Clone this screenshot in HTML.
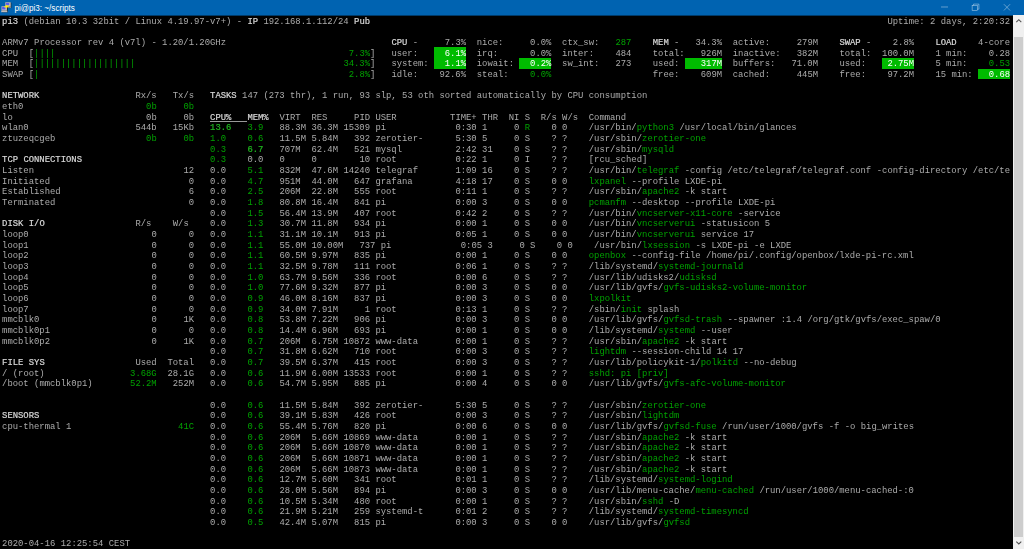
<!DOCTYPE html>
<html lang="en">
<head>
<meta charset="utf-8">
<title>pi@pi3: ~/scripts</title>
<style>
html,body{margin:0;padding:0;background:#000;overflow:hidden}
#win{position:relative;width:1024px;height:549px;background:#000;overflow:hidden}
#title{position:absolute;left:0;top:0;width:1024px;height:16px;background:linear-gradient(#0063b1 0,#0063b1 15px,#003a68 15px,#003a68 16px)}
#title .t{position:absolute;left:14.4px;top:1.1px;line-height:15.4px;font-family:"Liberation Sans",sans-serif;font-size:8.13px;color:#fff;white-space:pre}
#term{filter:blur(0.3px);position:absolute;left:0;top:0;width:1013px;height:549px;font-family:"Liberation Mono",monospace;font-size:8.8874px;line-height:10.6667px;color:#acacac}
.r{position:absolute;left:0;height:10.6667px;width:1013px;white-space:pre}
.r b{position:absolute;top:1.2px;font-weight:normal}
.r b.b{color:#d8d8d8;-webkit-text-stroke:0.2px #d8d8d8}
.r b.g{color:#00a200}
.r b.G{color:#20b820;-webkit-text-stroke:0.2px #20b820}
.r b.h{color:#fff}
i.hl{position:absolute;height:10.6667px;background:#00bb00;display:block}
i.ul{position:absolute;height:0.8px;background:#999;display:block}
#sb{position:absolute;left:1012.7px;top:15.4px;width:11.3px;height:533.6px;background:#f0f0f0}
#sb .th{position:absolute;left:0.9px;top:21.2px;width:9.2px;height:500.7px;background:#cdcdcd}
</style>
</head>
<body>
<div id="win">
<div id="term">
<div class="r" style="top:15.40px"><b class="b" style="left:2.07px">pi3</b> <b class="d" style="left:23.40px">(debian</b> <b class="d" style="left:66.07px">10.3</b> <b class="d" style="left:92.74px">32bit</b> <b class="d" style="left:124.74px">/</b> <b class="d" style="left:135.40px">Linux</b> <b class="d" style="left:167.40px">4.19.97-v7+)</b> <b class="d" style="left:236.74px">-</b> <b class="b" style="left:247.40px">IP</b> <b class="d" style="left:263.40px">192.168.1.112/24</b> <b class="b" style="left:354.07px">Pub</b> <b class="d" style="left:887.40px">Uptime:</b> <b class="d" style="left:930.07px">2</b> <b class="d" style="left:940.74px">days,</b> <b class="d" style="left:972.74px">2:20:32</b></div>
<div class="r" style="top:36.73px"><b class="d" style="left:2.07px">ARMv7</b> <b class="d" style="left:34.07px">Processor</b> <b class="d" style="left:87.40px">rev</b> <b class="d" style="left:108.74px">4</b> <b class="d" style="left:119.40px">(v7l)</b> <b class="d" style="left:151.40px">-</b> <b class="d" style="left:162.07px">1.20/1.20GHz</b> <b class="b" style="left:391.40px">CPU</b> <b class="d" style="left:412.74px">-</b> <b class="d" style="left:444.74px">7.3%</b> <b class="d" style="left:476.74px">nice:</b> <b class="d" style="left:530.07px">0.0%</b> <b class="d" style="left:562.07px">ctx_sw:</b> <b class="g" style="left:615.40px">287</b> <b class="b" style="left:652.74px">MEM</b> <b class="d" style="left:674.07px">-</b> <b class="d" style="left:695.40px">34.3%</b> <b class="d" style="left:732.74px">active:</b> <b class="d" style="left:796.74px">279M</b> <b class="b" style="left:839.40px">SWAP</b> <b class="d" style="left:866.07px">-</b> <b class="d" style="left:892.74px">2.8%</b> <b class="b" style="left:935.40px">LOAD</b> <b class="d" style="left:978.07px">4-core</b></div>
<i class="hl" style="left:434.07px;top:47.40px;width:32.00px"></i>
<div class="r" style="top:47.40px"><b class="d" style="left:2.07px">CPU</b> <b class="d" style="left:28.74px">[</b> <b class="g" style="left:34.07px">||||</b> <b class="g" style="left:348.74px">7.3%</b> <b class="d" style="left:370.07px">]</b> <b class="d" style="left:391.40px">user:</b> <b class="h" style="left:444.74px">6.1%</b> <b class="d" style="left:476.74px">irq:</b> <b class="d" style="left:530.07px">0.0%</b> <b class="d" style="left:562.07px">inter:</b> <b class="d" style="left:615.40px">484</b> <b class="d" style="left:652.74px">total:</b> <b class="d" style="left:700.74px">926M</b> <b class="d" style="left:732.74px">inactive:</b> <b class="d" style="left:796.74px">382M</b> <b class="d" style="left:839.40px">total:</b> <b class="d" style="left:882.07px">100.0M</b> <b class="d" style="left:935.40px">1</b> <b class="d" style="left:946.07px">min:</b> <b class="d" style="left:988.74px">0.28</b></div>
<i class="hl" style="left:434.07px;top:58.07px;width:32.00px"></i>
<i class="hl" style="left:519.40px;top:58.07px;width:32.00px"></i>
<i class="hl" style="left:684.74px;top:58.07px;width:37.33px"></i>
<i class="hl" style="left:882.07px;top:58.07px;width:32.00px"></i>
<div class="r" style="top:58.07px"><b class="d" style="left:2.07px">MEM</b> <b class="d" style="left:28.74px">[</b> <b class="g" style="left:34.07px">|||||||||||||||||||</b> <b class="g" style="left:343.40px">34.3%</b> <b class="d" style="left:370.07px">]</b> <b class="d" style="left:391.40px">system:</b> <b class="h" style="left:444.74px">1.1%</b> <b class="d" style="left:476.74px">iowait:</b> <b class="h" style="left:530.07px">0.2%</b> <b class="d" style="left:562.07px">sw_int:</b> <b class="d" style="left:615.40px">273</b> <b class="d" style="left:652.74px">used:</b> <b class="h" style="left:700.74px">317M</b> <b class="d" style="left:732.74px">buffers:</b> <b class="d" style="left:791.40px">71.0M</b> <b class="d" style="left:839.40px">used:</b> <b class="h" style="left:887.40px">2.75M</b> <b class="d" style="left:935.40px">5</b> <b class="d" style="left:946.07px">min:</b> <b class="g" style="left:988.74px">0.53</b></div>
<i class="hl" style="left:978.07px;top:68.73px;width:32.00px"></i>
<div class="r" style="top:68.73px"><b class="d" style="left:2.07px">SWAP</b> <b class="d" style="left:28.74px">[</b> <b class="g" style="left:34.07px">|</b> <b class="g" style="left:348.74px">2.8%</b> <b class="d" style="left:370.07px">]</b> <b class="d" style="left:391.40px">idle:</b> <b class="d" style="left:439.40px">92.6%</b> <b class="d" style="left:476.74px">steal:</b> <b class="g" style="left:530.07px">0.0%</b> <b class="d" style="left:652.74px">free:</b> <b class="d" style="left:700.74px">609M</b> <b class="d" style="left:732.74px">cached:</b> <b class="d" style="left:796.74px">445M</b> <b class="d" style="left:839.40px">free:</b> <b class="d" style="left:887.40px">97.2M</b> <b class="d" style="left:935.40px">15</b> <b class="d" style="left:951.40px">min:</b> <b class="h" style="left:988.74px">0.68</b></div>
<div class="r" style="top:90.07px"><b class="b" style="left:2.07px">NETWORK</b> <b class="d" style="left:135.40px">Rx/s</b> <b class="d" style="left:172.74px">Tx/s</b> <b class="b" style="left:210.07px">TASKS</b> <b class="d" style="left:242.07px">147</b> <b class="d" style="left:263.40px">(273</b> <b class="d" style="left:290.07px">thr),</b> <b class="d" style="left:322.07px">1</b> <b class="d" style="left:332.74px">run,</b> <b class="d" style="left:359.40px">93</b> <b class="d" style="left:375.40px">slp,</b> <b class="d" style="left:402.07px">53</b> <b class="d" style="left:418.07px">oth</b> <b class="d" style="left:439.40px">sorted</b> <b class="d" style="left:476.74px">automatically</b> <b class="d" style="left:551.40px">by</b> <b class="d" style="left:567.40px">CPU</b> <b class="d" style="left:588.74px">consumption</b></div>
<div class="r" style="top:100.73px"><b class="d" style="left:2.07px">eth0</b> <b class="g" style="left:146.07px">0b</b> <b class="g" style="left:183.40px">0b</b></div>
<div class="r" style="top:111.40px"><b class="d" style="left:2.07px">lo</b> <b class="d" style="left:146.07px">0b</b> <b class="d" style="left:183.40px">0b</b> <b class="b" style="left:210.07px">CPU%</b> <b class="b" style="left:247.40px">MEM%</b> <b class="d" style="left:279.40px">VIRT</b> <b class="d" style="left:311.40px">RES</b> <b class="d" style="left:354.07px">PID</b> <b class="d" style="left:375.40px">USER</b> <b class="d" style="left:450.07px">TIME+</b> <b class="d" style="left:482.07px">THR</b> <b class="d" style="left:508.74px">NI</b> <b class="d" style="left:524.74px">S</b> <b class="d" style="left:540.74px">R/s</b> <b class="d" style="left:562.07px">W/s</b> <b class="d" style="left:588.74px">Command</b></div>
<div class="r" style="top:122.07px"><b class="d" style="left:2.07px">wlan0</b> <b class="d" style="left:135.40px">544b</b> <b class="d" style="left:172.74px">15Kb</b> <b class="G" style="left:210.07px">13.6</b> <b class="g" style="left:247.40px">3.9</b> <b class="d" style="left:279.40px">88.3M</b> <b class="d" style="left:311.40px">36.3M</b> <b class="d" style="left:343.40px">15309</b> <b class="d" style="left:375.40px">pi</b> <b class="d" style="left:455.40px">0:30</b> <b class="d" style="left:482.07px">1</b> <b class="d" style="left:514.07px">0</b> <b class="g" style="left:524.74px">R</b> <b class="d" style="left:551.40px">0</b> <b class="d" style="left:562.07px">0</b> <b class="d" style="left:588.74px">/usr/bin/</b> <b class="g" style="left:636.74px">python3</b> <b class="d" style="left:679.40px">/usr/local/bin/glances</b></div>
<div class="r" style="top:132.73px"><b class="d" style="left:2.07px">ztuzeqcgeb</b> <b class="g" style="left:146.07px">0b</b> <b class="g" style="left:183.40px">0b</b> <b class="g" style="left:210.07px">1.0</b> <b class="g" style="left:247.40px">0.6</b> <b class="d" style="left:279.40px">11.5M</b> <b class="d" style="left:311.40px">5.84M</b> <b class="d" style="left:354.07px">392</b> <b class="d" style="left:375.40px">zerotier-</b> <b class="d" style="left:455.40px">5:30</b> <b class="d" style="left:482.07px">5</b> <b class="d" style="left:514.07px">0</b> <b class="d" style="left:524.74px">S</b> <b class="d" style="left:551.40px">?</b> <b class="d" style="left:562.07px">?</b> <b class="d" style="left:588.74px">/usr/sbin/</b> <b class="g" style="left:642.07px">zerotier-one</b></div>
<div class="r" style="top:143.40px"><b class="g" style="left:210.07px">0.3</b> <b class="G" style="left:247.40px">6.7</b> <b class="d" style="left:279.40px">707M</b> <b class="d" style="left:311.40px">62.4M</b> <b class="d" style="left:354.07px">521</b> <b class="d" style="left:375.40px">mysql</b> <b class="d" style="left:455.40px">2:42</b> <b class="d" style="left:482.07px">31</b> <b class="d" style="left:514.07px">0</b> <b class="d" style="left:524.74px">S</b> <b class="d" style="left:551.40px">?</b> <b class="d" style="left:562.07px">?</b> <b class="d" style="left:588.74px">/usr/sbin/</b> <b class="g" style="left:642.07px">mysqld</b></div>
<div class="r" style="top:154.07px"><b class="b" style="left:2.07px">TCP</b> <b class="b" style="left:23.40px">CONNECTIONS</b> <b class="g" style="left:210.07px">0.3</b> <b class="d" style="left:247.40px">0.0</b> <b class="d" style="left:279.40px">0</b> <b class="d" style="left:311.40px">0</b> <b class="d" style="left:359.40px">10</b> <b class="d" style="left:375.40px">root</b> <b class="d" style="left:455.40px">0:22</b> <b class="d" style="left:482.07px">1</b> <b class="d" style="left:514.07px">0</b> <b class="d" style="left:524.74px">I</b> <b class="d" style="left:551.40px">?</b> <b class="d" style="left:562.07px">?</b> <b class="d" style="left:588.74px">[rcu_sched]</b></div>
<div class="r" style="top:164.73px"><b class="d" style="left:2.07px">Listen</b> <b class="d" style="left:183.40px">12</b> <b class="d" style="left:210.07px">0.0</b> <b class="g" style="left:247.40px">5.1</b> <b class="d" style="left:279.40px">832M</b> <b class="d" style="left:311.40px">47.6M</b> <b class="d" style="left:343.40px">14240</b> <b class="d" style="left:375.40px">telegraf</b> <b class="d" style="left:455.40px">1:09</b> <b class="d" style="left:482.07px">16</b> <b class="d" style="left:514.07px">0</b> <b class="d" style="left:524.74px">S</b> <b class="d" style="left:551.40px">?</b> <b class="d" style="left:562.07px">?</b> <b class="d" style="left:588.74px">/usr/bin/</b> <b class="g" style="left:636.74px">telegraf</b> <b class="d" style="left:684.74px">-config</b> <b class="d" style="left:727.40px">/etc/telegraf/telegraf.conf</b> <b class="d" style="left:876.74px">-config-directory</b> <b class="d" style="left:972.74px">/etc/te</b></div>
<div class="r" style="top:175.40px"><b class="d" style="left:2.07px">Initiated</b> <b class="d" style="left:188.74px">0</b> <b class="d" style="left:210.07px">0.0</b> <b class="g" style="left:247.40px">4.7</b> <b class="d" style="left:279.40px">951M</b> <b class="d" style="left:311.40px">44.0M</b> <b class="d" style="left:354.07px">647</b> <b class="d" style="left:375.40px">grafana</b> <b class="d" style="left:455.40px">4:18</b> <b class="d" style="left:482.07px">17</b> <b class="d" style="left:514.07px">0</b> <b class="d" style="left:524.74px">S</b> <b class="d" style="left:551.40px">0</b> <b class="d" style="left:562.07px">0</b> <b class="g" style="left:588.74px">lxpanel</b> <b class="d" style="left:631.40px">--profile</b> <b class="d" style="left:684.74px">LXDE-pi</b></div>
<div class="r" style="top:186.07px"><b class="d" style="left:2.07px">Established</b> <b class="d" style="left:188.74px">6</b> <b class="d" style="left:210.07px">0.0</b> <b class="g" style="left:247.40px">2.5</b> <b class="d" style="left:279.40px">206M</b> <b class="d" style="left:311.40px">22.8M</b> <b class="d" style="left:354.07px">555</b> <b class="d" style="left:375.40px">root</b> <b class="d" style="left:455.40px">0:11</b> <b class="d" style="left:482.07px">1</b> <b class="d" style="left:514.07px">0</b> <b class="d" style="left:524.74px">S</b> <b class="d" style="left:551.40px">?</b> <b class="d" style="left:562.07px">?</b> <b class="d" style="left:588.74px">/usr/sbin/</b> <b class="g" style="left:642.07px">apache2</b> <b class="d" style="left:684.74px">-k</b> <b class="d" style="left:700.74px">start</b></div>
<div class="r" style="top:196.73px"><b class="d" style="left:2.07px">Terminated</b> <b class="d" style="left:188.74px">0</b> <b class="d" style="left:210.07px">0.0</b> <b class="g" style="left:247.40px">1.8</b> <b class="d" style="left:279.40px">80.8M</b> <b class="d" style="left:311.40px">16.4M</b> <b class="d" style="left:354.07px">841</b> <b class="d" style="left:375.40px">pi</b> <b class="d" style="left:455.40px">0:00</b> <b class="d" style="left:482.07px">3</b> <b class="d" style="left:514.07px">0</b> <b class="d" style="left:524.74px">S</b> <b class="d" style="left:551.40px">0</b> <b class="d" style="left:562.07px">0</b> <b class="g" style="left:588.74px">pcmanfm</b> <b class="d" style="left:631.40px">--desktop</b> <b class="d" style="left:684.74px">--profile</b> <b class="d" style="left:738.07px">LXDE-pi</b></div>
<div class="r" style="top:207.40px"><b class="d" style="left:210.07px">0.0</b> <b class="g" style="left:247.40px">1.5</b> <b class="d" style="left:279.40px">56.4M</b> <b class="d" style="left:311.40px">13.9M</b> <b class="d" style="left:354.07px">407</b> <b class="d" style="left:375.40px">root</b> <b class="d" style="left:455.40px">0:42</b> <b class="d" style="left:482.07px">2</b> <b class="d" style="left:514.07px">0</b> <b class="d" style="left:524.74px">S</b> <b class="d" style="left:551.40px">?</b> <b class="d" style="left:562.07px">?</b> <b class="d" style="left:588.74px">/usr/bin/</b> <b class="g" style="left:636.74px">vncserver-x11-core</b> <b class="d" style="left:738.07px">-service</b></div>
<div class="r" style="top:218.07px"><b class="b" style="left:2.07px">DISK</b> <b class="b" style="left:28.74px">I/O</b> <b class="d" style="left:135.40px">R/s</b> <b class="d" style="left:172.74px">W/s</b> <b class="d" style="left:210.07px">0.0</b> <b class="g" style="left:247.40px">1.3</b> <b class="d" style="left:279.40px">30.7M</b> <b class="d" style="left:311.40px">11.8M</b> <b class="d" style="left:354.07px">934</b> <b class="d" style="left:375.40px">pi</b> <b class="d" style="left:455.40px">0:00</b> <b class="d" style="left:482.07px">1</b> <b class="d" style="left:514.07px">0</b> <b class="d" style="left:524.74px">S</b> <b class="d" style="left:551.40px">0</b> <b class="d" style="left:562.07px">0</b> <b class="d" style="left:588.74px">/usr/bin/</b> <b class="g" style="left:636.74px">vncserverui</b> <b class="d" style="left:700.74px">-statusicon</b> <b class="d" style="left:764.74px">5</b></div>
<div class="r" style="top:228.73px"><b class="d" style="left:2.07px">loop0</b> <b class="d" style="left:151.40px">0</b> <b class="d" style="left:188.74px">0</b> <b class="d" style="left:210.07px">0.0</b> <b class="g" style="left:247.40px">1.1</b> <b class="d" style="left:279.40px">31.1M</b> <b class="d" style="left:311.40px">10.1M</b> <b class="d" style="left:354.07px">913</b> <b class="d" style="left:375.40px">pi</b> <b class="d" style="left:455.40px">0:05</b> <b class="d" style="left:482.07px">1</b> <b class="d" style="left:514.07px">0</b> <b class="d" style="left:524.74px">S</b> <b class="d" style="left:551.40px">0</b> <b class="d" style="left:562.07px">0</b> <b class="d" style="left:588.74px">/usr/bin/</b> <b class="g" style="left:636.74px">vncserverui</b> <b class="d" style="left:700.74px">service</b> <b class="d" style="left:743.40px">17</b></div>
<div class="r" style="top:239.40px"><b class="d" style="left:2.07px">loop1</b> <b class="d" style="left:151.40px">0</b> <b class="d" style="left:188.74px">0</b> <b class="d" style="left:210.07px">0.0</b> <b class="g" style="left:247.40px">1.1</b> <b class="d" style="left:279.40px">55.0M</b> <b class="d" style="left:311.40px">10.00M</b> <b class="d" style="left:359.40px">737</b> <b class="d" style="left:380.74px">pi</b> <b class="d" style="left:460.74px">0:05</b> <b class="d" style="left:487.40px">3</b> <b class="d" style="left:519.40px">0</b> <b class="d" style="left:530.07px">S</b> <b class="d" style="left:556.74px">0</b> <b class="d" style="left:567.40px">0</b> <b class="d" style="left:594.07px">/usr/bin/</b> <b class="g" style="left:642.07px">lxsession</b> <b class="d" style="left:695.40px">-s</b> <b class="d" style="left:711.40px">LXDE-pi</b> <b class="d" style="left:754.07px">-e</b> <b class="d" style="left:770.07px">LXDE</b></div>
<div class="r" style="top:250.07px"><b class="d" style="left:2.07px">loop2</b> <b class="d" style="left:151.40px">0</b> <b class="d" style="left:188.74px">0</b> <b class="d" style="left:210.07px">0.0</b> <b class="g" style="left:247.40px">1.1</b> <b class="d" style="left:279.40px">60.5M</b> <b class="d" style="left:311.40px">9.97M</b> <b class="d" style="left:354.07px">835</b> <b class="d" style="left:375.40px">pi</b> <b class="d" style="left:455.40px">0:00</b> <b class="d" style="left:482.07px">1</b> <b class="d" style="left:514.07px">0</b> <b class="d" style="left:524.74px">S</b> <b class="d" style="left:551.40px">0</b> <b class="d" style="left:562.07px">0</b> <b class="g" style="left:588.74px">openbox</b> <b class="d" style="left:631.40px">--config-file</b> <b class="d" style="left:706.07px">/home/pi/.config/openbox/lxde-pi-rc.xml</b></div>
<div class="r" style="top:260.73px"><b class="d" style="left:2.07px">loop3</b> <b class="d" style="left:151.40px">0</b> <b class="d" style="left:188.74px">0</b> <b class="d" style="left:210.07px">0.0</b> <b class="g" style="left:247.40px">1.1</b> <b class="d" style="left:279.40px">32.5M</b> <b class="d" style="left:311.40px">9.78M</b> <b class="d" style="left:354.07px">111</b> <b class="d" style="left:375.40px">root</b> <b class="d" style="left:455.40px">0:06</b> <b class="d" style="left:482.07px">1</b> <b class="d" style="left:514.07px">0</b> <b class="d" style="left:524.74px">S</b> <b class="d" style="left:551.40px">?</b> <b class="d" style="left:562.07px">?</b> <b class="d" style="left:588.74px">/lib/systemd/</b> <b class="g" style="left:658.07px">systemd-journald</b></div>
<div class="r" style="top:271.40px"><b class="d" style="left:2.07px">loop4</b> <b class="d" style="left:151.40px">0</b> <b class="d" style="left:188.74px">0</b> <b class="d" style="left:210.07px">0.0</b> <b class="g" style="left:247.40px">1.0</b> <b class="d" style="left:279.40px">63.7M</b> <b class="d" style="left:311.40px">9.56M</b> <b class="d" style="left:354.07px">336</b> <b class="d" style="left:375.40px">root</b> <b class="d" style="left:455.40px">0:00</b> <b class="d" style="left:482.07px">6</b> <b class="d" style="left:514.07px">0</b> <b class="d" style="left:524.74px">S</b> <b class="d" style="left:551.40px">?</b> <b class="d" style="left:562.07px">?</b> <b class="d" style="left:588.74px">/usr/lib/udisks2/</b> <b class="g" style="left:679.40px">udisksd</b></div>
<div class="r" style="top:282.07px"><b class="d" style="left:2.07px">loop5</b> <b class="d" style="left:151.40px">0</b> <b class="d" style="left:188.74px">0</b> <b class="d" style="left:210.07px">0.0</b> <b class="g" style="left:247.40px">1.0</b> <b class="d" style="left:279.40px">77.6M</b> <b class="d" style="left:311.40px">9.32M</b> <b class="d" style="left:354.07px">877</b> <b class="d" style="left:375.40px">pi</b> <b class="d" style="left:455.40px">0:00</b> <b class="d" style="left:482.07px">3</b> <b class="d" style="left:514.07px">0</b> <b class="d" style="left:524.74px">S</b> <b class="d" style="left:551.40px">0</b> <b class="d" style="left:562.07px">0</b> <b class="d" style="left:588.74px">/usr/lib/gvfs/</b> <b class="g" style="left:663.40px">gvfs-udisks2-volume-monitor</b></div>
<div class="r" style="top:292.73px"><b class="d" style="left:2.07px">loop6</b> <b class="d" style="left:151.40px">0</b> <b class="d" style="left:188.74px">0</b> <b class="d" style="left:210.07px">0.0</b> <b class="g" style="left:247.40px">0.9</b> <b class="d" style="left:279.40px">46.0M</b> <b class="d" style="left:311.40px">8.16M</b> <b class="d" style="left:354.07px">837</b> <b class="d" style="left:375.40px">pi</b> <b class="d" style="left:455.40px">0:00</b> <b class="d" style="left:482.07px">3</b> <b class="d" style="left:514.07px">0</b> <b class="d" style="left:524.74px">S</b> <b class="d" style="left:551.40px">0</b> <b class="d" style="left:562.07px">0</b> <b class="g" style="left:588.74px">lxpolkit</b></div>
<div class="r" style="top:303.40px"><b class="d" style="left:2.07px">loop7</b> <b class="d" style="left:151.40px">0</b> <b class="d" style="left:188.74px">0</b> <b class="d" style="left:210.07px">0.0</b> <b class="g" style="left:247.40px">0.9</b> <b class="d" style="left:279.40px">34.0M</b> <b class="d" style="left:311.40px">7.91M</b> <b class="d" style="left:364.74px">1</b> <b class="d" style="left:375.40px">root</b> <b class="d" style="left:455.40px">0:13</b> <b class="d" style="left:482.07px">1</b> <b class="d" style="left:514.07px">0</b> <b class="d" style="left:524.74px">S</b> <b class="d" style="left:551.40px">?</b> <b class="d" style="left:562.07px">?</b> <b class="d" style="left:588.74px">/sbin/</b> <b class="g" style="left:620.74px">init</b> <b class="d" style="left:647.40px">splash</b></div>
<div class="r" style="top:314.07px"><b class="d" style="left:2.07px">mmcblk0</b> <b class="d" style="left:151.40px">0</b> <b class="d" style="left:183.40px">1K</b> <b class="d" style="left:210.07px">0.0</b> <b class="g" style="left:247.40px">0.8</b> <b class="d" style="left:279.40px">53.8M</b> <b class="d" style="left:311.40px">7.22M</b> <b class="d" style="left:354.07px">906</b> <b class="d" style="left:375.40px">pi</b> <b class="d" style="left:455.40px">0:00</b> <b class="d" style="left:482.07px">3</b> <b class="d" style="left:514.07px">0</b> <b class="d" style="left:524.74px">S</b> <b class="d" style="left:551.40px">0</b> <b class="d" style="left:562.07px">0</b> <b class="d" style="left:588.74px">/usr/lib/gvfs/</b> <b class="g" style="left:663.40px">gvfsd-trash</b> <b class="d" style="left:727.40px">--spawner</b> <b class="d" style="left:780.74px">:1.4</b> <b class="d" style="left:807.40px">/org/gtk/gvfs/exec_spaw/0</b></div>
<div class="r" style="top:324.73px"><b class="d" style="left:2.07px">mmcblk0p1</b> <b class="d" style="left:151.40px">0</b> <b class="d" style="left:188.74px">0</b> <b class="d" style="left:210.07px">0.0</b> <b class="g" style="left:247.40px">0.8</b> <b class="d" style="left:279.40px">14.4M</b> <b class="d" style="left:311.40px">6.96M</b> <b class="d" style="left:354.07px">693</b> <b class="d" style="left:375.40px">pi</b> <b class="d" style="left:455.40px">0:00</b> <b class="d" style="left:482.07px">1</b> <b class="d" style="left:514.07px">0</b> <b class="d" style="left:524.74px">S</b> <b class="d" style="left:551.40px">0</b> <b class="d" style="left:562.07px">0</b> <b class="d" style="left:588.74px">/lib/systemd/</b> <b class="g" style="left:658.07px">systemd</b> <b class="d" style="left:700.74px">--user</b></div>
<div class="r" style="top:335.40px"><b class="d" style="left:2.07px">mmcblk0p2</b> <b class="d" style="left:151.40px">0</b> <b class="d" style="left:183.40px">1K</b> <b class="d" style="left:210.07px">0.0</b> <b class="g" style="left:247.40px">0.7</b> <b class="d" style="left:279.40px">206M</b> <b class="d" style="left:311.40px">6.75M</b> <b class="d" style="left:343.40px">10872</b> <b class="d" style="left:375.40px">www-data</b> <b class="d" style="left:455.40px">0:00</b> <b class="d" style="left:482.07px">1</b> <b class="d" style="left:514.07px">0</b> <b class="d" style="left:524.74px">S</b> <b class="d" style="left:551.40px">?</b> <b class="d" style="left:562.07px">?</b> <b class="d" style="left:588.74px">/usr/sbin/</b> <b class="g" style="left:642.07px">apache2</b> <b class="d" style="left:684.74px">-k</b> <b class="d" style="left:700.74px">start</b></div>
<div class="r" style="top:346.07px"><b class="d" style="left:210.07px">0.0</b> <b class="g" style="left:247.40px">0.7</b> <b class="d" style="left:279.40px">31.8M</b> <b class="d" style="left:311.40px">6.62M</b> <b class="d" style="left:354.07px">710</b> <b class="d" style="left:375.40px">root</b> <b class="d" style="left:455.40px">0:00</b> <b class="d" style="left:482.07px">3</b> <b class="d" style="left:514.07px">0</b> <b class="d" style="left:524.74px">S</b> <b class="d" style="left:551.40px">?</b> <b class="d" style="left:562.07px">?</b> <b class="g" style="left:588.74px">lightdm</b> <b class="d" style="left:631.40px">--session-child</b> <b class="d" style="left:716.74px">14</b> <b class="d" style="left:732.74px">17</b></div>
<div class="r" style="top:356.73px"><b class="b" style="left:2.07px">FILE</b> <b class="b" style="left:28.74px">SYS</b> <b class="d" style="left:135.40px">Used</b> <b class="d" style="left:167.40px">Total</b> <b class="d" style="left:210.07px">0.0</b> <b class="g" style="left:247.40px">0.7</b> <b class="d" style="left:279.40px">39.5M</b> <b class="d" style="left:311.40px">6.37M</b> <b class="d" style="left:354.07px">415</b> <b class="d" style="left:375.40px">root</b> <b class="d" style="left:455.40px">0:00</b> <b class="d" style="left:482.07px">3</b> <b class="d" style="left:514.07px">0</b> <b class="d" style="left:524.74px">S</b> <b class="d" style="left:551.40px">?</b> <b class="d" style="left:562.07px">?</b> <b class="d" style="left:588.74px">/usr/lib/policykit-1/</b> <b class="g" style="left:700.74px">polkitd</b> <b class="d" style="left:743.40px">--no-debug</b></div>
<div class="r" style="top:367.40px"><b class="d" style="left:2.07px">/</b> <b class="d" style="left:12.74px">(root)</b> <b class="g" style="left:130.07px">3.68G</b> <b class="d" style="left:167.40px">28.1G</b> <b class="d" style="left:210.07px">0.0</b> <b class="g" style="left:247.40px">0.6</b> <b class="d" style="left:279.40px">11.9M</b> <b class="d" style="left:311.40px">6.00M</b> <b class="d" style="left:343.40px">13533</b> <b class="d" style="left:375.40px">root</b> <b class="d" style="left:455.40px">0:00</b> <b class="d" style="left:482.07px">1</b> <b class="d" style="left:514.07px">0</b> <b class="d" style="left:524.74px">S</b> <b class="d" style="left:551.40px">?</b> <b class="d" style="left:562.07px">?</b> <b class="g" style="left:588.74px">sshd:</b> <b class="g" style="left:620.74px">pi</b> <b class="g" style="left:636.74px">[priv]</b></div>
<div class="r" style="top:378.07px"><b class="d" style="left:2.07px">/boot</b> <b class="d" style="left:34.07px">(mmcblk0p1)</b> <b class="g" style="left:130.07px">52.2M</b> <b class="d" style="left:172.74px">252M</b> <b class="d" style="left:210.07px">0.0</b> <b class="g" style="left:247.40px">0.6</b> <b class="d" style="left:279.40px">54.7M</b> <b class="d" style="left:311.40px">5.95M</b> <b class="d" style="left:354.07px">885</b> <b class="d" style="left:375.40px">pi</b> <b class="d" style="left:455.40px">0:00</b> <b class="d" style="left:482.07px">4</b> <b class="d" style="left:514.07px">0</b> <b class="d" style="left:524.74px">S</b> <b class="d" style="left:551.40px">0</b> <b class="d" style="left:562.07px">0</b> <b class="d" style="left:588.74px">/usr/lib/gvfs/</b> <b class="g" style="left:663.40px">gvfs-afc-volume-monitor</b></div>
<div class="r" style="top:399.40px"><b class="d" style="left:210.07px">0.0</b> <b class="g" style="left:247.40px">0.6</b> <b class="d" style="left:279.40px">11.5M</b> <b class="d" style="left:311.40px">5.84M</b> <b class="d" style="left:354.07px">392</b> <b class="d" style="left:375.40px">zerotier-</b> <b class="d" style="left:455.40px">5:30</b> <b class="d" style="left:482.07px">5</b> <b class="d" style="left:514.07px">0</b> <b class="d" style="left:524.74px">S</b> <b class="d" style="left:551.40px">?</b> <b class="d" style="left:562.07px">?</b> <b class="d" style="left:588.74px">/usr/sbin/</b> <b class="g" style="left:642.07px">zerotier-one</b></div>
<div class="r" style="top:410.07px"><b class="b" style="left:2.07px">SENSORS</b> <b class="d" style="left:210.07px">0.0</b> <b class="g" style="left:247.40px">0.6</b> <b class="d" style="left:279.40px">39.1M</b> <b class="d" style="left:311.40px">5.83M</b> <b class="d" style="left:354.07px">426</b> <b class="d" style="left:375.40px">root</b> <b class="d" style="left:455.40px">0:00</b> <b class="d" style="left:482.07px">3</b> <b class="d" style="left:514.07px">0</b> <b class="d" style="left:524.74px">S</b> <b class="d" style="left:551.40px">?</b> <b class="d" style="left:562.07px">?</b> <b class="d" style="left:588.74px">/usr/sbin/</b> <b class="g" style="left:642.07px">lightdm</b></div>
<div class="r" style="top:420.73px"><b class="d" style="left:2.07px">cpu-thermal</b> <b class="d" style="left:66.07px">1</b> <b class="g" style="left:178.07px">41C</b> <b class="d" style="left:210.07px">0.0</b> <b class="g" style="left:247.40px">0.6</b> <b class="d" style="left:279.40px">55.4M</b> <b class="d" style="left:311.40px">5.76M</b> <b class="d" style="left:354.07px">820</b> <b class="d" style="left:375.40px">pi</b> <b class="d" style="left:455.40px">0:00</b> <b class="d" style="left:482.07px">6</b> <b class="d" style="left:514.07px">0</b> <b class="d" style="left:524.74px">S</b> <b class="d" style="left:551.40px">0</b> <b class="d" style="left:562.07px">0</b> <b class="d" style="left:588.74px">/usr/lib/gvfs/</b> <b class="g" style="left:663.40px">gvfsd-fuse</b> <b class="d" style="left:722.07px">/run/user/1000/gvfs</b> <b class="d" style="left:828.74px">-f</b> <b class="d" style="left:844.74px">-o</b> <b class="d" style="left:860.74px">big_writes</b></div>
<div class="r" style="top:431.40px"><b class="d" style="left:210.07px">0.0</b> <b class="g" style="left:247.40px">0.6</b> <b class="d" style="left:279.40px">206M</b> <b class="d" style="left:311.40px">5.66M</b> <b class="d" style="left:343.40px">10869</b> <b class="d" style="left:375.40px">www-data</b> <b class="d" style="left:455.40px">0:00</b> <b class="d" style="left:482.07px">1</b> <b class="d" style="left:514.07px">0</b> <b class="d" style="left:524.74px">S</b> <b class="d" style="left:551.40px">?</b> <b class="d" style="left:562.07px">?</b> <b class="d" style="left:588.74px">/usr/sbin/</b> <b class="g" style="left:642.07px">apache2</b> <b class="d" style="left:684.74px">-k</b> <b class="d" style="left:700.74px">start</b></div>
<div class="r" style="top:442.07px"><b class="d" style="left:210.07px">0.0</b> <b class="g" style="left:247.40px">0.6</b> <b class="d" style="left:279.40px">206M</b> <b class="d" style="left:311.40px">5.66M</b> <b class="d" style="left:343.40px">10870</b> <b class="d" style="left:375.40px">www-data</b> <b class="d" style="left:455.40px">0:00</b> <b class="d" style="left:482.07px">1</b> <b class="d" style="left:514.07px">0</b> <b class="d" style="left:524.74px">S</b> <b class="d" style="left:551.40px">?</b> <b class="d" style="left:562.07px">?</b> <b class="d" style="left:588.74px">/usr/sbin/</b> <b class="g" style="left:642.07px">apache2</b> <b class="d" style="left:684.74px">-k</b> <b class="d" style="left:700.74px">start</b></div>
<div class="r" style="top:452.73px"><b class="d" style="left:210.07px">0.0</b> <b class="g" style="left:247.40px">0.6</b> <b class="d" style="left:279.40px">206M</b> <b class="d" style="left:311.40px">5.66M</b> <b class="d" style="left:343.40px">10871</b> <b class="d" style="left:375.40px">www-data</b> <b class="d" style="left:455.40px">0:00</b> <b class="d" style="left:482.07px">1</b> <b class="d" style="left:514.07px">0</b> <b class="d" style="left:524.74px">S</b> <b class="d" style="left:551.40px">?</b> <b class="d" style="left:562.07px">?</b> <b class="d" style="left:588.74px">/usr/sbin/</b> <b class="g" style="left:642.07px">apache2</b> <b class="d" style="left:684.74px">-k</b> <b class="d" style="left:700.74px">start</b></div>
<div class="r" style="top:463.40px"><b class="d" style="left:210.07px">0.0</b> <b class="g" style="left:247.40px">0.6</b> <b class="d" style="left:279.40px">206M</b> <b class="d" style="left:311.40px">5.66M</b> <b class="d" style="left:343.40px">10873</b> <b class="d" style="left:375.40px">www-data</b> <b class="d" style="left:455.40px">0:00</b> <b class="d" style="left:482.07px">1</b> <b class="d" style="left:514.07px">0</b> <b class="d" style="left:524.74px">S</b> <b class="d" style="left:551.40px">?</b> <b class="d" style="left:562.07px">?</b> <b class="d" style="left:588.74px">/usr/sbin/</b> <b class="g" style="left:642.07px">apache2</b> <b class="d" style="left:684.74px">-k</b> <b class="d" style="left:700.74px">start</b></div>
<div class="r" style="top:474.07px"><b class="d" style="left:210.07px">0.0</b> <b class="g" style="left:247.40px">0.6</b> <b class="d" style="left:279.40px">12.7M</b> <b class="d" style="left:311.40px">5.60M</b> <b class="d" style="left:354.07px">341</b> <b class="d" style="left:375.40px">root</b> <b class="d" style="left:455.40px">0:01</b> <b class="d" style="left:482.07px">1</b> <b class="d" style="left:514.07px">0</b> <b class="d" style="left:524.74px">S</b> <b class="d" style="left:551.40px">?</b> <b class="d" style="left:562.07px">?</b> <b class="d" style="left:588.74px">/lib/systemd/</b> <b class="g" style="left:658.07px">systemd-logind</b></div>
<div class="r" style="top:484.73px"><b class="d" style="left:210.07px">0.0</b> <b class="g" style="left:247.40px">0.6</b> <b class="d" style="left:279.40px">28.0M</b> <b class="d" style="left:311.40px">5.56M</b> <b class="d" style="left:354.07px">894</b> <b class="d" style="left:375.40px">pi</b> <b class="d" style="left:455.40px">0:00</b> <b class="d" style="left:482.07px">3</b> <b class="d" style="left:514.07px">0</b> <b class="d" style="left:524.74px">S</b> <b class="d" style="left:551.40px">0</b> <b class="d" style="left:562.07px">0</b> <b class="d" style="left:588.74px">/usr/lib/menu-cache/</b> <b class="g" style="left:695.40px">menu-cached</b> <b class="d" style="left:759.40px">/run/user/1000/menu-cached-:0</b></div>
<div class="r" style="top:495.40px"><b class="d" style="left:210.07px">0.0</b> <b class="g" style="left:247.40px">0.6</b> <b class="d" style="left:279.40px">10.5M</b> <b class="d" style="left:311.40px">5.34M</b> <b class="d" style="left:354.07px">480</b> <b class="d" style="left:375.40px">root</b> <b class="d" style="left:455.40px">0:00</b> <b class="d" style="left:482.07px">1</b> <b class="d" style="left:514.07px">0</b> <b class="d" style="left:524.74px">S</b> <b class="d" style="left:551.40px">?</b> <b class="d" style="left:562.07px">?</b> <b class="d" style="left:588.74px">/usr/sbin/</b> <b class="g" style="left:642.07px">sshd</b> <b class="d" style="left:668.74px">-D</b></div>
<div class="r" style="top:506.07px"><b class="d" style="left:210.07px">0.0</b> <b class="g" style="left:247.40px">0.6</b> <b class="d" style="left:279.40px">21.9M</b> <b class="d" style="left:311.40px">5.21M</b> <b class="d" style="left:354.07px">259</b> <b class="d" style="left:375.40px">systemd-t</b> <b class="d" style="left:455.40px">0:01</b> <b class="d" style="left:482.07px">2</b> <b class="d" style="left:514.07px">0</b> <b class="d" style="left:524.74px">S</b> <b class="d" style="left:551.40px">?</b> <b class="d" style="left:562.07px">?</b> <b class="d" style="left:588.74px">/lib/systemd/</b> <b class="g" style="left:658.07px">systemd-timesyncd</b></div>
<div class="r" style="top:516.73px"><b class="d" style="left:210.07px">0.0</b> <b class="g" style="left:247.40px">0.5</b> <b class="d" style="left:279.40px">42.4M</b> <b class="d" style="left:311.40px">5.07M</b> <b class="d" style="left:354.07px">815</b> <b class="d" style="left:375.40px">pi</b> <b class="d" style="left:455.40px">0:00</b> <b class="d" style="left:482.07px">3</b> <b class="d" style="left:514.07px">0</b> <b class="d" style="left:524.74px">S</b> <b class="d" style="left:551.40px">0</b> <b class="d" style="left:562.07px">0</b> <b class="d" style="left:588.74px">/usr/lib/gvfs/</b> <b class="g" style="left:663.40px">gvfsd</b></div>
<div class="r" style="top:538.07px"><b class="d" style="left:2.07px">2020-04-16</b> <b class="d" style="left:60.74px">12:25:54</b> <b class="d" style="left:108.74px">CEST</b></div>
<i class="ul" style="left:210.07px;top:120.77px;width:37.33px"></i>
</div>
<div id="title">
<svg style="position:absolute;left:0;top:0" width="14" height="15" viewBox="0 0 14 15">
<rect x="5.7" y="2.7" width="5.6" height="5.2" fill="#181818"/>
<rect x="5.3" y="2.3" width="5.4" height="4.4" fill="#c6c6c6"/><rect x="5.9" y="2.9" width="3.4" height="2.6" fill="#5a5af0"/>
<rect x="5.6" y="6.7" width="5.4" height="1" fill="#a8a8a8"/>
<rect x="1.9" y="6.7" width="5.8" height="5.6" fill="#181818"/>
<rect x="1.5" y="6.3" width="5.4" height="4.4" fill="#c6c6c6"/><rect x="2.1" y="6.9" width="3.4" height="2.6" fill="#5a5af0"/>
<rect x="1.2" y="10.7" width="6.1" height="1.5" fill="#bdbdbd"/>
<path d="M4.3 7.1 L7 4.9 L6.7 6 L9.1 5.7 L6.3 8 L6.6 6.9 Z" fill="#ffee00" stroke="#ffee00" stroke-width="0.5"/>
</svg>
<span class="t">pi@pi3: ~/scripts</span>
<svg style="position:absolute;left:936px;top:0" width="80" height="15.4" viewBox="0 0 80 15.4" fill="none" stroke="#d8e8f6" stroke-width="0.5" stroke-opacity="0.9">
<path d="M5 7 H12"/>
<rect x="36.1" y="5.5" width="5.3" height="5"/><path d="M37.5 5.5 V4.1 H42.9 V9.2 H41.4"/>
<path d="M67.9 4.2 L74.1 10.5 M74.1 4.2 L67.9 10.5"/>
</svg>
</div>
<div id="sb"><div class="th"></div>
<svg style="position:absolute;left:0;top:0" width="11" height="534" viewBox="0 0 11 534" fill="none" stroke="#505050" stroke-width="1.05">
<path d="M3.3 7.1 L5.8 4.7 L8.3 7.1"/><path d="M3.3 526.6 L5.8 529 L8.3 526.6"/>
</svg>
</div>
</div>
</body>
</html>
